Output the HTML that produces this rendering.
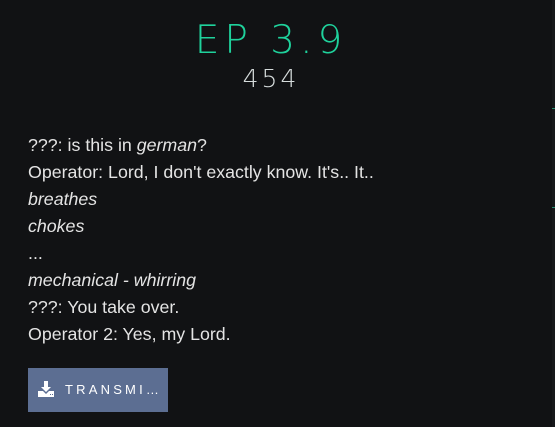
<!DOCTYPE html>
<html><head><style>
html,body{margin:0;padding:0;background:#111214;width:555px;height:427px;overflow:hidden;position:relative}
.t{position:absolute;left:0;width:542px;text-align:center;font-family:"DejaVu Sans","Liberation Sans",sans-serif;font-weight:200}
.ep{top:18px;font-size:39px;color:#1fd29c;letter-spacing:5px;}
.num{top:64px;font-size:25px;color:#d6dcdc;letter-spacing:3px;}
.body{position:absolute;left:28px;top:132px;font-family:"Liberation Sans",sans-serif;font-size:17.8px;color:#e4e4e4;line-height:27px}
.body div{white-space:nowrap}
i{font-style:italic}
.btn{position:absolute;left:28px;top:368px;width:140px;height:44px;background:#5c6e92;color:#fff;font-family:"Liberation Sans",sans-serif;font-size:13px;letter-spacing:3.2px}
.btn span{position:absolute;left:37px;top:14px}
.strip{position:absolute;left:552px;top:0;width:3px;height:427px;background:#16181a}
.tick{position:absolute;left:552px;width:3px;height:1px;background:#2a8a70}
</style></head><body>
<div class="t ep">EP 3.9</div>
<div class="t num">454</div>
<div class="body">
<div>???: is this in <i>german</i>?</div>
<div>Operator: Lord, I don't exactly know. It's.. It..</div>
<div><i>breathes</i></div>
<div><i>chokes</i></div>
<div>...</div>
<div><i>mechanical - whirring</i></div>
<div>???: You take over.</div>
<div>Operator 2: Yes, my Lord.</div>
</div>
<div class="btn">
<svg style="position:absolute;left:10px;top:13px" width="16" height="16" viewBox="0 0 16 16"><path d="M6 0h4v6h3l-5 5-5-5h3z" fill="#fff"/><path d="M0 10h5l3 3 3-3h5v6H0z" fill="#fff"/><rect x="12" y="13" width="1" height="1" fill="#5c6e92"/><rect x="14" y="13" width="1" height="1" fill="#5c6e92"/></svg>
<span>TRANSMI…</span></div>
<div class="strip"></div>
<div class="tick" style="top:108px"></div>
<div class="tick" style="top:207px"></div>
</body></html>
